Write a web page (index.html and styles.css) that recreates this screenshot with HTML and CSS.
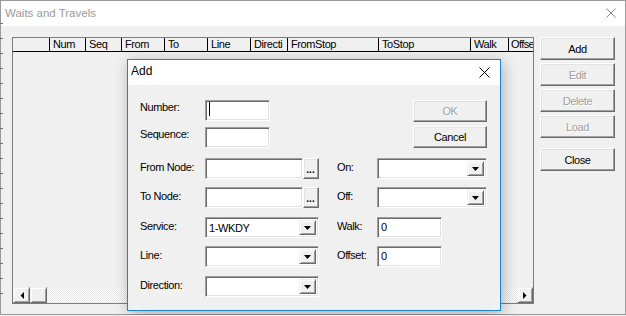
FILE: index.html
```html
<!DOCTYPE html>
<html>
<head>
<meta charset="utf-8">
<title>Waits and Travels</title>
<link rel="stylesheet" href="styles.css">
</head>
<body>
<div class="window">
  <div class="titlebar">
    <span class="title">Waits and Travels</span>
    <svg class="close-outer" width="10" height="10" viewBox="0 0 10 10"><path d="M0.5 0.5 L9.5 9.5 M9.5 0.5 L0.5 9.5" stroke="#8a8a8a" stroke-width="1" fill="none"/></svg>
  </div>
  <div class="client">
    <div class="listview">
      <div class="lv-header">
        <div class="hcell w37"></div>
        <div class="hcell w36">Num</div>
        <div class="hcell w36">Seq</div>
        <div class="hcell w43">From</div>
        <div class="hcell w43">To</div>
        <div class="hcell w43">Line</div>
        <div class="hcell w37">Directi</div>
        <div class="hcell w91">FromStop</div>
        <div class="hcell w92">ToStop</div>
        <div class="hcell w38">Walk</div>
        <div class="hcell wlast">Offse</div>
      </div>
      <div class="lv-body"></div>
      <div class="hscroll">
        <div class="sb-btn"><svg width="4" height="7" viewBox="0 0 4 7"><polygon points="4,0 4,7 0.5,3.5" fill="#000"/></svg></div>
        <div class="sb-thumb"></div>
        <div class="sb-track"></div>
        <div class="sb-btn narrow"><svg width="4" height="7" viewBox="0 0 4 7"><polygon points="0,0 0,7 3.5,3.5" fill="#000"/></svg></div>
      </div>
    </div>
    <div class="side">
      <div class="btn">Add</div>
      <div class="btn disabled">Edit</div>
      <div class="btn disabled">Delete</div>
      <div class="btn disabled">Load</div>
      <div class="btn close-btn">Close</div>
    </div>
  </div>

  <div class="dialog">
    <div class="dlg-title">
      <span class="dlg-caption">Add</span>
      <svg class="dlg-x" width="11" height="11" viewBox="0 0 11 11"><path d="M0.5 0.5 L10.5 10.5 M10.5 0.5 L0.5 10.5" stroke="#000" stroke-width="1" fill="none"/></svg>
    </div>
    <div class="dlg-body">
      <div class="form">
        <div class="lbl top">Number:</div>
        <div class="field edit w65"><span class="caret"></span></div>
        <div class="btn dlg-btn ok disabled">OK</div>

        <div class="lbl top">Sequence:</div>
        <div class="field edit w65"></div>
        <div class="btn dlg-btn cancel">Cancel</div>

        <div class="lbl">From Node:</div>
        <div class="picker"><div class="field edit grow"></div><div class="btn dots">...</div></div>
        <div class="lbl c4">On:</div>
        <div class="field combo"><span class="val"></span><span class="dd"><svg width="7" height="4" viewBox="0 0 7 4"><polygon points="0,0 7,0 3.5,4" fill="#000"/></svg></span></div>

        <div class="lbl">To Node:</div>
        <div class="picker"><div class="field edit grow"></div><div class="btn dots">...</div></div>
        <div class="lbl c4">Off:</div>
        <div class="field combo"><span class="val"></span><span class="dd"><svg width="7" height="4" viewBox="0 0 7 4"><polygon points="0,0 7,0 3.5,4" fill="#000"/></svg></span></div>

        <div class="lbl">Service:</div>
        <div class="field combo"><span class="val">1-WKDY</span><span class="dd"><svg width="7" height="4" viewBox="0 0 7 4"><polygon points="0,0 7,0 3.5,4" fill="#000"/></svg></span></div>
        <div class="lbl c4">Walk:</div>
        <div class="field edit w65">0</div>

        <div class="lbl">Line:</div>
        <div class="field combo"><span class="val"></span><span class="dd"><svg width="7" height="4" viewBox="0 0 7 4"><polygon points="0,0 7,0 3.5,4" fill="#000"/></svg></span></div>
        <div class="lbl c4">Offset:</div>
        <div class="field edit w65">0</div>

        <div class="lbl">Direction:</div>
        <div class="field combo"><span class="val"></span><span class="dd"><svg width="7" height="4" viewBox="0 0 7 4"><polygon points="0,0 7,0 3.5,4" fill="#000"/></svg></span></div>
      </div>
    </div>
  </div>
</div>
</body>
</html>
```
FILE: styles.css
```css
html, body {
  margin: 0;
  padding: 0;
  background: #f0f0f0;
}
body {
  font-family: "Liberation Sans", Arial, sans-serif;
  font-size: 11px;
  letter-spacing: -0.4px;
  color: #000;
}

.window {
  position: relative;
  width: 626px;
  height: 315px;
  box-sizing: border-box;
  border: 1px solid #9a9a9a;
  background: #f0f0f0;
  display: flex;
  flex-direction: column;
}
.window::before {
  content: "";
  position: absolute;
  left: -1px;
  top: 22px;
  width: 3px;
  height: 285px;
  background: repeating-linear-gradient(to bottom, #6e6e6e 0 1px, transparent 1px 15px);
}

.titlebar {
  height: 25px;
  flex: none;
  background: #fff;
  display: flex;
  align-items: center;
  justify-content: space-between;
  padding: 0 9px 0 4px;
}
.title {
  font-size: 11.5px;
  letter-spacing: 0;
  line-height: 25px;
  color: #9a9a9a;
}
.close-outer { display: block; margin-top: -1px; }

.client {
  flex: 1;
  display: flex;
  gap: 6px;
  padding: 11px 10px 10px 11px;
}

.listview {
  width: 522px;
  height: 267px;
  box-sizing: border-box;
  border: 1px solid #7d7d7d;
  display: flex;
  flex-direction: column;
  overflow: hidden;
  flex: none;
}
.lv-header {
  height: 14px;
  flex: none;
  display: flex;
  box-sizing: border-box;
  border-bottom: 1px solid #000;
  overflow: hidden;
}
.hcell {
  flex: none;
  box-sizing: border-box;
  border-right: 1px solid #000;
  padding-left: 3px;
  line-height: 13px;
  white-space: nowrap;
  overflow: hidden;
}
.w36 { width: 36px; }
.w37 { width: 37px; }
.w38 { width: 38px; }
.w43 { width: 43px; }
.w91 { width: 91px; }
.w92 { width: 92px; }
.wlast { width: 24px; padding-left: 2px; letter-spacing: -0.6px; border-right: 0; }

.lv-body { flex: 1; }

.hscroll {
  height: 16px;
  flex: none;
  display: flex;
}
.sb-btn, .sb-thumb {
  width: 17px;
  box-sizing: border-box;
  border: 1px solid;
  border-color: #f0f0f0 #696969 #696969 #f0f0f0;
  box-shadow: inset 1px 1px #fff, inset -1px -1px #a0a0a0;
  background: #f0f0f0;
  display: flex;
  align-items: center;
  justify-content: center;
  flex: none;
}
.sb-btn.narrow { width: 16px; }
.sb-btn svg { display: block; }
.sb-track {
  flex: 1;
  background: repeating-conic-gradient(#ffffff 0 25%, #e6e6e6 0 50%) 0 0 / 2px 2px;
}

.side {
  width: 75px;
  flex: none;
  display: flex;
  flex-direction: column;
  gap: 3px;
}
.btn {
  box-sizing: border-box;
  border: 1px solid;
  border-color: #fff #696969 #696969 #fff;
  box-shadow: inset -1px -1px #a0a0a0, inset 1px 1px #e3e3e3;
  background: #f0f0f0;
  display: flex;
  align-items: center;
  justify-content: center;
  white-space: nowrap;
}
.side .btn { height: 23px; }
.side .close-btn { margin-top: 7px; }
.btn.disabled { color: #a0a0a0; text-shadow: 1px 1px 0 #fff; }

/* dialog */
.dialog {
  position: absolute;
  left: 126px;
  top: 58px;
  width: 374px;
  height: 252px;
  box-sizing: border-box;
  border: 1px solid #1c82d4;
  background: #f0f0f0;
  box-shadow: 2px 3px 14px rgba(0, 0, 0, 0.28);
  display: flex;
  flex-direction: column;
}
.dlg-title {
  height: 25px;
  flex: none;
  background: #fff;
  display: flex;
  justify-content: space-between;
  align-items: flex-start;
  padding: 0 10px 0 3px;
}
.dlg-caption {
  font-size: 12px;
  letter-spacing: 0;
  line-height: 23px;
}
.dlg-x { display: block; margin-top: 7px; }

.dlg-body {
  flex: 1;
  padding: 15px 0 0 12px;
}
.form {
  display: grid;
  grid-template-columns: 65px 114px 18px 40px 110px;
  grid-template-rows: 27px 31px 29px 30px 29px 30px 21px;
  align-items: start;
}
.lbl {
  grid-column: 1;
  line-height: 19px;
  white-space: nowrap;
}
.lbl.top { line-height: 15px; }
.lbl.c4 { grid-column: 4; }

.field {
  box-sizing: border-box;
  height: 21px;
  border: 1px solid;
  border-color: #a0a0a0 #fff #fff #a0a0a0;
  box-shadow: inset 1px 1px #696969, inset -1px -1px #e3e3e3;
  background: #fff;
}
.edit {
  padding-left: 3px;
  line-height: 18px;
  position: relative;
}
.w65 { width: 65px; }
.caret {
  display: inline-block;
  width: 1px;
  height: 14px;
  background: #000;
  vertical-align: top;
  margin-top: 1px;
}
.form > .lbl.c4 + .edit { grid-column: 5; }

.dlg-btn {
  grid-column: 4 / 6;
  justify-self: end;
  width: 74px;
  height: 22px;
}
.cancel { margin-top: -1px; }

.picker {
  grid-column: 2;
  display: flex;
  height: 21px;
}
.picker .grow { width: 98px; flex: none; }
.dots {
  width: 16px;
  height: 21px;
  flex: none;
  align-items: flex-end;
  font-weight: bold;
  font-size: 10px;
  letter-spacing: 0;
  line-height: 10px;
  padding: 0 1px 3px 0;
}

.combo {
  display: flex;
  align-items: stretch;
  padding: 2px;
}
.form > .combo { grid-column: 2; }
.form > .lbl.c4 + .combo { grid-column: 5; }
.combo .val {
  flex: 1;
  padding-left: 1px;
  line-height: 16px;
}
.dd {
  width: 17px;
  flex: none;
  box-sizing: border-box;
  border: 1px solid;
  border-color: #f0f0f0 #696969 #696969 #f0f0f0;
  box-shadow: inset 1px 1px #fff, inset -1px -1px #a0a0a0;
  background: #f0f0f0;
  display: flex;
  align-items: center;
  justify-content: center;
}
.dd svg { display: block; }
```
